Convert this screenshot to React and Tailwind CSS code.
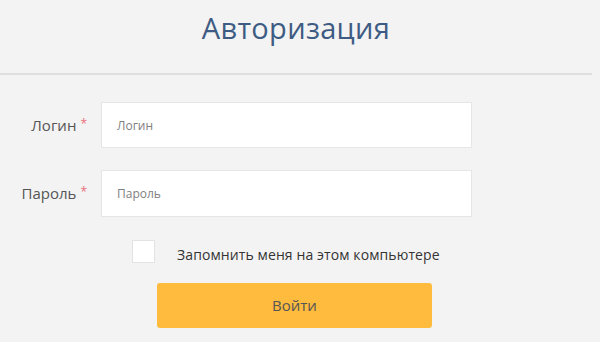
import React, { useState } from 'react'

// Login form – "Авторизация"
export default function App() {
  const [login, setLogin] = useState('')
  const [password, setPassword] = useState('')
  const [remember, setRemember] = useState(false)

  const font = { fontFamily: '"Open Sans", "DejaVu Sans", sans-serif' }

  return (
    <div className="min-h-[342px] w-[600px] bg-[#f3f3f3] text-[#444]" style={font}>
      {/* Header */}
      <div className="mr-[8px] h-[75px] border-b-2 border-[#dedede] pt-[8px] text-center">
        <h1 className="text-[29px] leading-[40px] tracking-[0.3px] text-[#3e5c83]">Авторизация</h1>
      </div>

      {/* Form */}
      <form className="pt-[27px]" onSubmit={(e) => e.preventDefault()}>
        <div className="flex items-center">
          <label className="w-[101px] pr-[14px] text-right text-[15px] text-[#555]">
            Логин<span className="relative -top-[3px] ml-[4px] text-[12px] text-[#e8707a]">*</span>
          </label>
          <input
            value={login}
            onChange={(e) => setLogin(e.target.value)}
            placeholder="Логин"
            className="h-[46px] w-[371px] border border-[#e6e6e6] bg-white px-[15px] text-[12px] text-[#555] outline-none placeholder:text-[#808080]"
          />
        </div>

        <div className="mt-[22px] flex items-center">
          <label className="w-[101px] pr-[14px] text-right text-[15px] text-[#555]">
            Пароль<span className="relative -top-[3px] ml-[4px] text-[12px] text-[#e8707a]">*</span>
          </label>
          <input
            type="password"
            value={password}
            onChange={(e) => setPassword(e.target.value)}
            placeholder="Пароль"
            className="h-[47px] w-[371px] border border-[#e6e6e6] bg-white px-[15px] text-[12px] text-[#555] outline-none placeholder:text-[#808080]"
          />
        </div>

        <label className="ml-[132px] mt-[21px] flex cursor-pointer items-center">
          <input
            type="checkbox"
            checked={remember}
            onChange={(e) => setRemember(e.target.checked)}
            className="h-[23px] w-[23px] appearance-none border border-[#e3e3e3] bg-white"
          />
          <span className="ml-[22px] mt-[6px] text-[14px] tracking-[0.1px] text-[#333]">Запомнить меня на этом компьютере</span>
        </label>

        <button
          type="submit"
          className="ml-[157px] mt-[18px] h-[45px] w-[275px] rounded-[3px] bg-[#ffbb3e] text-[15px] text-[#555]"
        >
          Войти
        </button>
      </form>
    </div>
  )
}
